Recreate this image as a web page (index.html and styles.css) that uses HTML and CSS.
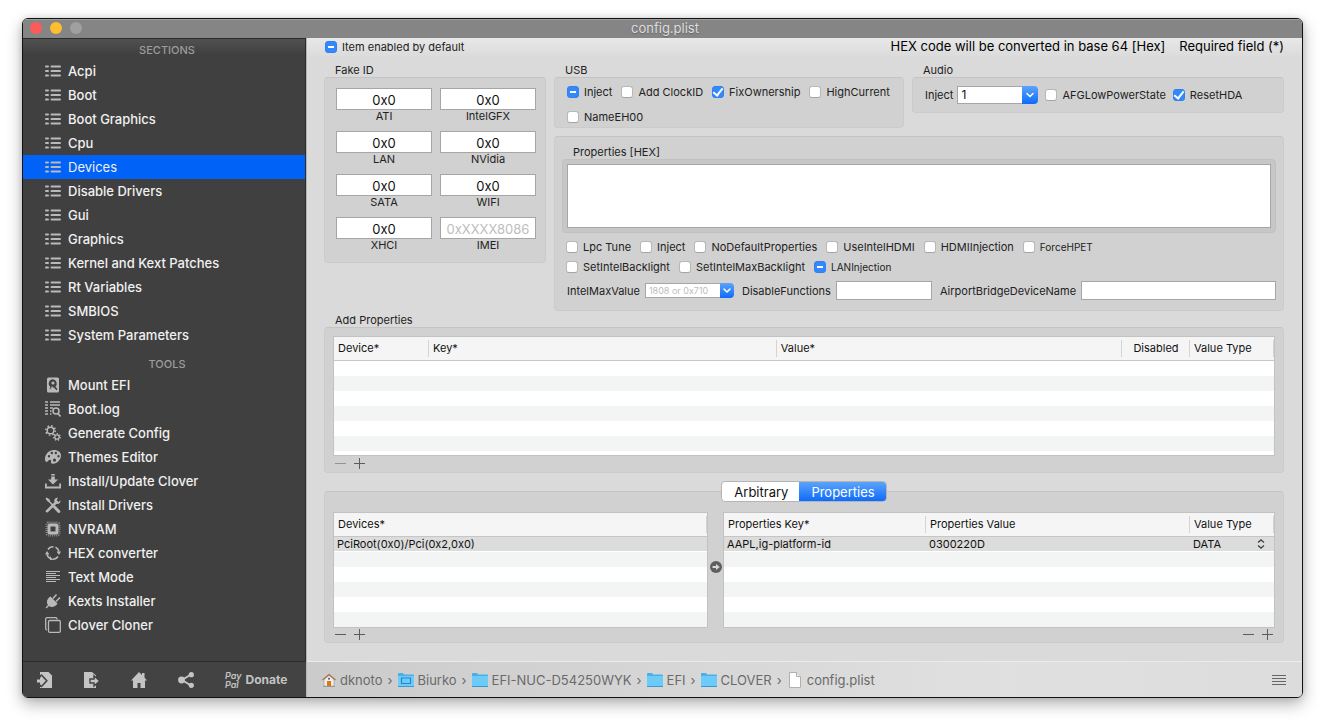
FILE: index.html
```html
<!DOCTYPE html>
<html lang="en">
<head>
    <meta charset="UTF-8">
    <meta name="viewport" content="width=device-width, initial-scale=1.0">
    <title>config.plist</title>
    <link rel="stylesheet" href="styles.css">
</head>
<body>

    <!-- Icons -->
    <svg class="sprite" aria-hidden="true">
        <symbol id="i-list" viewBox="0 0 16 16">
            <path d="M1 3.5h2M6.5 3.5h8.500M1 8h2M6.500 8h8.500M1 12.500h2M6.500 12.500h8.500" fill="none" stroke="currentColor" stroke-width="2" stroke-linecap="round"/>
        </symbol>
        <symbol id="i-disk" viewBox="0 0 16 16">
            <path fill="currentColor" fill-rule="evenodd" d="M3.500 0.500h9a1.500 1.500 0 0 1 1.500 1.500v12a1.500 1.500 0 0 1-1.500 1.500h-9A1.500 1.500 0 0 1 2 14V2A1.500 1.500 0 0 1 3.500.500zM8 2.200a4.300 4.300 0 0 0-2.600 7.700L4.500 12l1.500.5 1.500-2.100a4.300 4.300 0 0 0 1.400 0l2.600 2.800 1-1-2.100-2.600A4.300 4.300 0 0 0 8 2.200z"/>
            <circle cx="8" cy="6" r="1.600" fill="currentColor"/>
            <path d="M7.500 9.500l-2 3" stroke="currentColor" stroke-width="1.200"/>
        </symbol>
        <symbol id="i-log" viewBox="0 0 16 16">
            <path d="M0 1h3M0 4h3M0 7h3M0 10h3M0 13h3M5 1h10M5 4h10M5 7h3M5 10h1.500M5 13h1.500" stroke="currentColor" stroke-width="1.600"/>
            <circle cx="11" cy="10" r="3" fill="none" stroke="currentColor" stroke-width="1.500"/>
            <path d="M13 12.500l2.500 3" stroke="currentColor" stroke-width="1.600"/>
        </symbol>
        <symbol id="i-gears" viewBox="0 0 16 16">
            <g fill="none" stroke="currentColor">
                <circle cx="5.500" cy="5.500" r="3.300" stroke-width="1.400"/>
                <circle cx="5.500" cy="5.500" r="4.700" stroke-width="1.600" stroke-dasharray="1.600 2.090"/>
                <circle cx="12" cy="12" r="2.200" stroke-width="1.300"/>
                <circle cx="12" cy="12" r="3.300" stroke-width="1.300" stroke-dasharray="1.300 1.660"/>
            </g>
        </symbol>
        <symbol id="i-palette" viewBox="0 0 16 16">
            <path fill="currentColor" fill-rule="evenodd" d="M9 1c4 0 7 2.200 7 5.600 0 3.900-3.600 8.200-8 8.200-1.600 0-2.400-.9-2-2 .4-1.200.1-2-1-2-1.400 0-2 2.200-3.400 2.200C.500 13 0 11.400 0 9.800 0 5 4.200 1 9 1zM4 6a1.200 1.200 0 1 0 0 2.400A1.200 1.200 0 0 0 4 6zm2.800-3.200a1.200 1.200 0 1 0 0 2.400 1.200 1.200 0 0 0 0-2.400zm4 0a1.200 1.200 0 1 0 0 2.400 1.200 1.200 0 0 0 0-2.400zm2.700 3.200a1.200 1.200 0 1 0 0 2.400 1.200 1.200 0 0 0 0-2.400zM9.500 9.500a1.600 1.600 0 1 0 0 3.200 1.600 1.600 0 0 0 0-3.200z"/>
        </symbol>
        <symbol id="i-install" viewBox="0 0 16 16">
            <path fill="currentColor" d="M6.200 1h3.600v1.400H6.200zM6.200 3.400h3.600v3.200H13L8 11.400 3 6.600h3.200zM0 10.500h1.800v3h12.400v-3H16V15.500H0z"/>
        </symbol>
        <symbol id="i-tools" viewBox="0 0 16 16">
            <path d="M1.500 2l4 3.800 3 3.400" stroke="currentColor" stroke-width="1.500" fill="none"/>
            <path d="M9.500 10l4.300 4.500" stroke="currentColor" stroke-width="3" stroke-linecap="round"/>
            <path d="M2 14.200L11.500 5" stroke="currentColor" stroke-width="2.600" stroke-linecap="round"/>
            <path d="M15.500 3.500l-2.200 1.400-1.700-1.600L13 .700c-2.500-.3-4.300 1.500-3.700 3.900l2.400 2.300c2.500.2 4.200-1.300 3.800-3.400zM.500 1.500L1.700.500l3.200 2.300-.2 1.900-1.700.1z" fill="currentColor"/>
        </symbol>
        <symbol id="i-chip" viewBox="0 0 16 16">
            <rect x="1.500" y="1.500" width="13" height="13" rx="2" fill="none" stroke="currentColor" stroke-width="2" stroke-dasharray="1 1" opacity=".6"/>
            <rect x="4" y="4" width="8" height="8" rx="1" fill="none" stroke="currentColor" stroke-width="3"/>
        </symbol>
        <symbol id="i-convert" viewBox="0 0 16 16">
            <path d="M2 9.500A6.200 6.200 0 0 0 5 13.500M7.500 14.200A6.200 6.200 0 0 0 13 11.500M14 6.500A6.200 6.200 0 0 0 10.500 2.300M8.500 1.800A6.200 6.200 0 0 0 3 4.500" fill="none" stroke="currentColor" stroke-width="1.600"/>
            <path d="M0 9.500l2-3.500 2.500 3.500zM11.500 6.500H16L14 10zM5 11v4h3z" fill="currentColor"/>
        </symbol>
        <symbol id="i-text" viewBox="0 0 16 16">
            <path d="M1 2.500h14M1 4.500h10M1 6.500h14M1 8.500h10M1 10.500h14M1 12.500h10" stroke="currentColor" stroke-width="1"/>
        </symbol>
        <symbol id="i-plug" viewBox="0 0 16 16">
            <path d="M5.500 3.500l7 7c-2 3.500-6 4.500-8.500 2.500l-2.500 2.500-1-1L3 12c-2-2.500-1-6.500 2.500-8.500z" fill="currentColor"/>
            <path d="M8 5.500L11.500 1.500M11 8.500L15 4.500" stroke="currentColor" stroke-width="1.500"/>
        </symbol>
        <symbol id="i-clone" viewBox="0 0 16 16">
            <path d="M12 2.500V1.800A1.200 1.200 0 0 0 10.800.700H2A1.300 1.300 0 0 0 .700 2v9.500A1.300 1.300 0 0 0 2 12.800" fill="none" stroke="currentColor" stroke-width="1.300"/>
            <rect x="3.500" y="3.500" width="11.800" height="11.800" rx="1.300" fill="none" stroke="currentColor" stroke-width="1.300"/>
        </symbol>
        <symbol id="i-import" viewBox="0 0 16 16">
            <path d="M3 0h8.500L15 3.500V16H3z" fill="currentColor"/>
            <path d="M4 2.500L9.800 8.800 4 15" fill="none" stroke="#434343" stroke-width="1.600"/>
            <path d="M3 3h1v12H3z" fill="#434343"/>
            <path d="M0 7.500h3V5l4.500 4L3 13v-2.500H0z" fill="currentColor"/>
        </symbol>
        <symbol id="i-export" viewBox="0 0 16 16">
            <path d="M0 0h8l4 3.500V16H0z" fill="currentColor"/>
            <path d="M6 7h4V3.800L15.800 9 10 14v-3H6z" fill="currentColor" stroke="#434343" stroke-width="1.400"/>
        </symbol>
        <symbol id="i-home" viewBox="0 0 16 16">
            <path d="M8 0l3 3V1h2.500v4.500L16 8.500h-2V16H9.500v-5h-3v5H2V8.500H0z" fill="currentColor"/>
        </symbol>
        <symbol id="i-share" viewBox="0 0 16 16">
            <path d="M13 2.500L4 8l9 5.500" fill="none" stroke="currentColor" stroke-width="2"/>
            <circle cx="3.500" cy="8" r="3.400" fill="currentColor"/>
            <circle cx="13.300" cy="2.700" r="2.600" fill="currentColor"/>
            <circle cx="13.300" cy="13.300" r="2.600" fill="currentColor"/>
        </symbol>
        <symbol id="i-minus" viewBox="0 0 11 11">
            <path d="M0 5.500h11" stroke="currentColor"/>
        </symbol>
        <symbol id="i-plus" viewBox="0 0 11 11">
            <path d="M0 5.500h11M5.500 0v11" stroke="currentColor"/>
        </symbol>
        <symbol id="i-down" viewBox="0 0 10 10">
            <path d="M2 3.500L5 6.500 8 3.500" fill="none" stroke="#fff" stroke-width="1.500" stroke-linecap="round" stroke-linejoin="round"/>
        </symbol>
        <symbol id="i-updown" viewBox="0 0 8 10">
            <path d="M1 3.500L4 .900l3 2.600M1 6.500l3 2.600 3-2.600" fill="none" stroke="#444" stroke-width="1.300"/>
        </symbol>
        <symbol id="i-arrow" viewBox="0 0 12 12">
            <circle cx="6" cy="6" r="6" fill="#5f5f5f"/>
            <path d="M2.500 5h3.500V3L9.800 6 6 9V7H2.500z" fill="#d8d8d8"/>
        </symbol>
        <symbol id="i-house" viewBox="0 0 14 14">
            <path d="M2 6.500L7 2.500l5 4V13H2z" fill="#eee" stroke="#999" stroke-width=".6"/>
            <path d="M.500 7L7 1.500 13.500 7" fill="none" stroke="#a9744c" stroke-width="1.300"/>
            <circle cx="7" cy="5.800" r="1" fill="#555"/>
            <path d="M5 8h4v5H5z" fill="#d9790f"/>
            <path d="M1 13.500h12" stroke="#999"/>
        </symbol>
        <symbol id="i-folder" viewBox="0 0 16 14">
            <path d="M0 1a1 1 0 0 1 1-1h4l1 1.500h9a1 1 0 0 1 1 1V13.500H0z" fill="#49b0e6"/>
            <path d="M0 3h16v10H0z" fill="#6dcbfa"/>
            <path d="M0 13.500h16" stroke="#3b98d0"/>
        </symbol>
        <symbol id="i-desktop" viewBox="0 0 16 14">
            <path d="M0 1a1 1 0 0 1 1-1h4l1 1.500h9a1 1 0 0 1 1 1V13.500H0z" fill="#49b0e6"/>
            <path d="M0 3h16v10H0z" fill="#6dcbfa"/>
            <path d="M3.500 5h9v5.500h-9z" fill="#6dcbfa" stroke="#2489c9" stroke-width="1.200"/>
            <path d="M0 13.500h16" stroke="#3b98d0"/>
        </symbol>
        <symbol id="i-file" viewBox="0 0 12 16">
            <path d="M.500.500h7l4 4v11H.500z" fill="#fff" stroke="#b0b0b0"/>
            <path d="M7.500.500v4h4" fill="#eee" stroke="#b0b0b0"/>
        </symbol>
        <symbol id="i-menu" viewBox="0 0 14 10">
            <path d="M0 .500h14M0 3.500h14M0 6.500h14M0 9.500h14" stroke="#666"/>
        </symbol>
    </svg>

    <div class="window">
        <header class="titlebar">
            <div class="lights">
                <button class="light red" aria-label="Close"></button>
                <button class="light yellow" aria-label="Minimize"></button>
                <button class="light off" aria-label="Zoom" disabled></button>
            </div>
            <h1>config.plist</h1>
        </header>

        <div class="body">
            <!-- Sidebar -->
            <aside class="sidebar">
                <nav class="menu">
                    <h2>SECTIONS</h2>
                    <a href="#"><svg><use href="#i-list"/></svg>Acpi</a>
                    <a href="#"><svg><use href="#i-list"/></svg>Boot</a>
                    <a href="#"><svg><use href="#i-list"/></svg>Boot Graphics</a>
                    <a href="#"><svg><use href="#i-list"/></svg>Cpu</a>
                    <a href="#" class="active"><svg><use href="#i-list"/></svg>Devices</a>
                    <a href="#"><svg><use href="#i-list"/></svg>Disable Drivers</a>
                    <a href="#"><svg><use href="#i-list"/></svg>Gui</a>
                    <a href="#"><svg><use href="#i-list"/></svg>Graphics</a>
                    <a href="#"><svg><use href="#i-list"/></svg>Kernel and Kext Patches</a>
                    <a href="#"><svg><use href="#i-list"/></svg>Rt Variables</a>
                    <a href="#"><svg><use href="#i-list"/></svg>SMBIOS</a>
                    <a href="#"><svg><use href="#i-list"/></svg>System Parameters</a>
                    <h2 class="tools-title">TOOLS</h2>
                    <a href="#"><svg><use href="#i-disk"/></svg>Mount EFI</a>
                    <a href="#"><svg><use href="#i-log"/></svg>Boot.log</a>
                    <a href="#"><svg><use href="#i-gears"/></svg>Generate Config</a>
                    <a href="#"><svg><use href="#i-palette"/></svg>Themes Editor</a>
                    <a href="#"><svg><use href="#i-install"/></svg>Install/Update Clover</a>
                    <a href="#"><svg><use href="#i-tools"/></svg>Install Drivers</a>
                    <a href="#"><svg><use href="#i-chip"/></svg>NVRAM</a>
                    <a href="#"><svg><use href="#i-convert"/></svg>HEX converter</a>
                    <a href="#"><svg><use href="#i-text"/></svg>Text Mode</a>
                    <a href="#"><svg><use href="#i-plug"/></svg>Kexts Installer</a>
                    <a href="#"><svg><use href="#i-clone"/></svg>Clover Cloner</a>
                </nav>
                <div class="actions">
                    <button aria-label="Import"><svg><use href="#i-import"/></svg></button>
                    <button aria-label="Export"><svg><use href="#i-export"/></svg></button>
                    <button aria-label="Home"><svg><use href="#i-home"/></svg></button>
                    <button aria-label="Share"><svg><use href="#i-share"/></svg></button>
                    <button class="donate"><span class="paypal">Pay<br>Pal</span>Donate</button>
                </div>
            </aside>

            <!-- Devices page -->
            <main class="main">
                <div class="page">
                    <div class="top">
                        <label class="check"><input type="checkbox" class="mixed">Item enabled by default</label>
                        <p class="notes"><span>HEX code will be converted in base 64 [Hex]</span><span>Required field (*)</span></p>
                    </div>

                    <div class="groups">
                        <section>
                            <h3>Fake ID</h3>
                            <div class="box fake">
                                <label><input type="text" value="0x0">ATI</label>
                                <label><input type="text" value="0x0">IntelGFX</label>
                                <label><input type="text" value="0x0">LAN</label>
                                <label><input type="text" value="0x0">NVidia</label>
                                <label><input type="text" value="0x0">SATA</label>
                                <label><input type="text" value="0x0">WIFI</label>
                                <label><input type="text" value="0x0">XHCI</label>
                                <label><input type="text" placeholder="0xXXXX8086">IMEI</label>
                            </div>
                        </section>

                        <div class="right">
                            <div class="row">
                                <section class="usb">
                                    <h3>USB</h3>
                                    <div class="box checks">
                                        <label class="check"><input type="checkbox" class="mixed">Inject</label>
                                        <label class="check"><input type="checkbox">Add ClockID</label>
                                        <label class="check"><input type="checkbox" checked>FixOwnership</label>
                                        <label class="check"><input type="checkbox">HighCurrent</label>
                                        <label class="check"><input type="checkbox">NameEH00</label>
                                    </div>
                                </section>
                                <section class="audio">
                                    <h3>Audio</h3>
                                    <div class="box checks">
                                        <label for="audioInject">Inject</label>
                                        <span class="combo">
                                            <select id="audioInject"><option>1</option></select>
                                            <svg><use href="#i-down"/></svg>
                                        </span>
                                        <label class="check"><input type="checkbox">AFGLowPowerState</label>
                                        <label class="check"><input type="checkbox" checked>ResetHDA</label>
                                    </div>
                                </section>
                            </div>

                            <section class="box props">
                                <h3><label for="hex">Properties [HEX]</label></h3>
                                <div class="inner"><textarea id="hex"></textarea></div>
                                <div class="options">
                                    <label class="check"><input type="checkbox">Lpc Tune</label>
                                    <label class="check"><input type="checkbox">Inject</label>
                                    <label class="check"><input type="checkbox">NoDefaultProperties</label>
                                    <label class="check"><input type="checkbox">UseIntelHDMI</label>
                                    <label class="check"><input type="checkbox">HDMIInjection</label>
                                    <label class="check small"><input type="checkbox">ForceHPET</label>
                                </div>
                                <div class="options">
                                    <label class="check"><input type="checkbox">SetIntelBacklight</label>
                                    <label class="check"><input type="checkbox">SetIntelMaxBacklight</label>
                                    <label class="check small"><input type="checkbox" class="mixed">LANInjection</label>
                                </div>
                                <div class="fields">
                                    <label for="maxValue">IntelMaxValue</label>
                                    <span class="combo mini">
                                        <select id="maxValue"><option>1808 or 0x710</option></select>
                                        <svg><use href="#i-down"/></svg>
                                    </span>
                                    <label for="disableFn">DisableFunctions</label>
                                    <input type="text" id="disableFn" class="fn">
                                    <label for="airport">AirportBridgeDeviceName</label>
                                    <input type="text" id="airport" class="airport">
                                </div>
                            </section>
                        </div>
                    </div>

                    <section class="add">
                        <h3>Add Properties</h3>
                        <div class="box">
                            <div class="grid tall">
                                <table>
                                    <thead>
                                        <tr>
                                            <th class="w-device">Device*</th>
                                            <th class="w-name">Key*</th>
                                            <th>Value*</th>
                                            <th class="w-disabled">Disabled</th>
                                            <th class="w-type">Value Type</th>
                                        </tr>
                                    </thead>
                                </table>
                            </div>
                            <div class="edit">
                                <button aria-label="Remove" disabled><svg><use href="#i-minus"/></svg></button>
                                <button aria-label="Add"><svg><use href="#i-plus"/></svg></button>
                            </div>
                        </div>
                    </section>

                    <section class="box lists">
                        <div class="tabs">
                            <button>Arbitrary</button>
                            <button class="on">Properties</button>
                        </div>
                        <div class="split">
                            <div class="devices">
                                <div class="grid">
                                    <table>
                                        <thead><tr><th>Devices*</th></tr></thead>
                                        <tbody><tr><td>PciRoot(0x0)/Pci(0x2,0x0)</td></tr></tbody>
                                    </table>
                                </div>
                                <div class="edit">
                                    <button aria-label="Remove"><svg><use href="#i-minus"/></svg></button>
                                    <button aria-label="Add"><svg><use href="#i-plus"/></svg></button>
                                </div>
                            </div>
                            <button class="go" aria-label="Show properties"><svg><use href="#i-arrow"/></svg></button>
                            <div class="values">
                                <div class="grid">
                                    <table>
                                        <thead>
                                            <tr>
                                                <th class="w-key">Properties Key*</th>
                                                <th>Properties Value</th>
                                                <th class="w-type">Value Type</th>
                                            </tr>
                                        </thead>
                                        <tbody>
                                            <tr>
                                                <td>AAPL,ig-platform-id</td>
                                                <td>0300220D</td>
                                                <td><span class="type"><select aria-label="Value Type"><option>DATA</option></select><svg><use href="#i-updown"/></svg></span></td>
                                            </tr>
                                        </tbody>
                                    </table>
                                </div>
                                <div class="edit end">
                                    <button aria-label="Remove"><svg><use href="#i-minus"/></svg></button>
                                    <button aria-label="Add"><svg><use href="#i-plus"/></svg></button>
                                </div>
                            </div>
                        </div>
                    </section>
                </div>

                <footer class="pathbar">
                    <nav class="path">
                        <a href="#"><svg class="house"><use href="#i-house"/></svg>dknoto</a><i>›</i>
                        <a href="#"><svg><use href="#i-desktop"/></svg>Biurko</a><i>›</i>
                        <a href="#"><svg><use href="#i-folder"/></svg>EFI-NUC-D54250WYK</a><i>›</i>
                        <a href="#"><svg><use href="#i-folder"/></svg>EFI</a><i>›</i>
                        <a href="#"><svg><use href="#i-folder"/></svg>CLOVER</a><i>›</i>
                        <a href="#"><svg class="file"><use href="#i-file"/></svg>config.plist</a>
                    </nav>
                    <button class="burger" aria-label="Menu"><svg><use href="#i-menu"/></svg></button>
                </footer>
            </main>
        </div>
    </div>

    <script>
        document.querySelectorAll('.mixed').forEach(box => box.indeterminate = true);
    </script>
</body>
</html>
```

FILE: styles.css
```css
* {
    margin: 0;
    padding: 0;
    box-sizing: border-box;
}
body {
    background: #fff;
    min-height: 100vh;
    padding: 18px 22px 26px;
    display: flex;
    font-family: Inter, "Liberation Sans", sans-serif;
    font-size: 11px;
    line-height: 14px;
    color: #222;
}
button, input, select, textarea {
    font: inherit;
    color: inherit;
    background: none;
    border: 0;
    border-radius: 0;
    outline: 0;
    appearance: none;
}
a {
    color: inherit;
    text-decoration: none;
}
svg {
    display: block;
    flex: none;
}
.sprite {
    display: none;
}

/* Window */
.window {
    flex: 1;
    display: flex;
    flex-direction: column;
    border: 1px solid #111;
    border-radius: 6px;
    overflow: hidden;
    box-shadow: 0 6px 16px rgba(0, 0, 0, 0.3), 0 0 6px rgba(0, 0, 0, 0.12);
}
.titlebar {
    display: grid;
    grid-template-columns: 1fr auto 1fr;
    align-items: center;
    height: 19px;
    padding: 0 2px 1px 7px;
    background: #858585;
    box-shadow: inset 0 1px #a0a0a0;
}
.titlebar h1 {
    font-size: 13px;
    font-weight: 400;
    color: #dedede;
    text-shadow: 0 1px 1px #666;
}
.lights {
    display: flex;
    gap: 8px;
}
.light {
    width: 12px;
    height: 12px;
    border-radius: 50%;
}
.red { background: #fc5b57; }
.yellow { background: #fdbe2f; }
.off { background: #a0a0a0; }

.body {
    flex: 1;
    display: flex;
}

/* Sidebar */
.sidebar {
    width: 283px;
    flex: none;
    display: flex;
    flex-direction: column;
    background: #404040;
    color: #f0f0f0;
}
.menu {
    flex: 1;
    padding-bottom: 24px;
    background: linear-gradient(#525252, #404040 16px);
    border-right: 1px solid #2c2c2c;
    box-shadow: inset 0 1px #2c2c2c;
}
.menu h2 {
    height: 21px;
    padding: 5px 0 0 6px;
    font-size: 11px;
    font-weight: 500;
    text-align: center;
    color: #9c9c9c;
}
.menu .tools-title {
    height: 26px;
    padding-top: 10px;
}
.menu a {
    display: flex;
    align-items: center;
    gap: 7px;
    height: 24px;
    padding-left: 22px;
    font-size: 13px;
    font-weight: 500;
}
.menu svg {
    width: 16px;
    height: 16px;
    color: #b9b9b9;
}
.menu .active {
    background: #0062f6;
    font-weight: 400;
}
.actions {
    display: flex;
    align-items: center;
    gap: 31px;
    height: 36px;
    padding-left: 14px;
    background: #434343;
    border-top: 1px solid #2c2c2c;
    color: #c4c4c4;
}
.actions svg {
    width: 16px;
    height: 16px;
}
.donate {
    display: flex;
    align-items: center;
    gap: 4px;
    font-size: 12px;
    font-weight: 700;
}
.paypal {
    font-size: 9px;
    line-height: 9px;
    font-weight: 600;
    font-style: italic;
    text-align: left;
}

/* Main */
.main {
    flex: 1;
    min-width: 0;
    display: flex;
    flex-direction: column;
    background: linear-gradient(#e8e8e8, #dadada 20px);
    border-left: 1px solid #b4b4b4;
}
.page {
    flex: 1;
    padding: 0 18px 18px 17px;
}
.top {
    display: flex;
    justify-content: space-between;
    height: 25px;
}
.top .check {
    height: 18px;
    padding-left: 1px;
}
.notes {
    display: flex;
    gap: 14px;
    font-size: 13px;
    line-height: 17px;
    color: #000;
}
h3 {
    padding-left: 11px;
    font-size: 11px;
    font-weight: 400;
}
.box {
    background: #d1d1d1;
    border: 1px solid #cbcbcb;
    border-top-color: #c4c4c4;
    border-radius: 4px;
}
.groups {
    display: grid;
    grid-template-columns: 222px 1fr;
    gap: 8px;
}
.right {
    display: flex;
    flex-direction: column;
    gap: 8px;
    min-width: 0;
}
.row {
    display: flex;
    gap: 8px;
}
.usb {
    flex: 350;
}
.audio {
    flex: 372;
}

/* Form controls */
.check {
    display: flex;
    align-items: center;
    gap: 5px;
    white-space: nowrap;
}
.check input {
    display: flex;
    justify-content: center;
    align-items: center;
    width: 12px;
    height: 12px;
    background: #fff;
    border: 1px solid #b8b8b8;
    border-bottom-color: #a4a4a4;
    border-radius: 3px;
}
.check input:checked, .check input:indeterminate {
    background: #3388fd;
    border-color: #2f80f0;
}
.check input:indeterminate::after {
    content: "";
    width: 6px;
    height: 2px;
    background: #fff;
}
.check input:checked::after {
    content: "";
    width: 4px;
    height: 8px;
    margin-bottom: 2px;
    border: solid #fff;
    border-width: 0 2px 2px 0;
    transform: rotate(38deg);
}
.small {
    font-size: 10px;
}
input[type=text], textarea {
    background: #fff;
    border: 1px solid #a6a6a6;
}
.fake {
    display: grid;
    grid-template-columns: 1fr 1fr;
    gap: 8px;
    padding: 10px 9px 10px 11px;
}
.fake label {
    text-align: center;
    line-height: 13px;
}
.fake input {
    display: block;
    width: 100%;
    height: 22px;
    padding-top: 2px;
    font-size: 13px;
    text-align: center;
    color: #111;
}
::placeholder {
    color: #bdbdbd;
}
.checks {
    display: flex;
    flex-wrap: wrap;
    align-items: center;
    column-gap: 9px;
    padding: 5px 12px 0;
}
.usb .checks {
    height: 51px;
    row-gap: 5px;
    padding-top: 4px;
}
.usb .check {
    height: 20px;
}
.audio .checks {
    height: 36px;
    column-gap: 7px;
    padding: 0 12px;
}
.combo {
    display: flex;
    width: 81px;
    height: 18px;
    margin-left: -3px;
}
.combo select {
    flex: 1;
    min-width: 0;
    padding-left: 3px;
    background: #fff;
    border: 1px solid #a6a6a6;
    border-right: 0;
    font-size: 12px;
    color: #111;
}
.combo svg {
    width: 16px;
    height: 18px;
    padding: 3px;
    background: linear-gradient(#5ba4fb, #0f6bfb);
    border-radius: 0 4px 4px 0;
    pointer-events: none;
}
.mini {
    width: 89px;
    height: 15px;
}
.mini select {
    font-size: 9px;
    color: #bdbdbd;
}
.mini svg {
    width: 14px;
    height: 15px;
    padding: 2px;
}
.props {
    padding: 8px 7px 10px;
}
.inner {
    padding: 4px;
    margin-bottom: 4px;
    background: #c7c7c7;
    border: 1px solid #c0c0c0;
    border-radius: 4px;
}
.inner textarea {
    display: block;
    width: 100%;
    height: 64px;
    resize: none;
}
.options {
    display: flex;
    gap: 9px;
    height: 20px;
    padding-left: 4px;
}
.fields {
    display: flex;
    align-items: center;
    gap: 8px;
    margin-top: 4px;
    padding-left: 5px;
}
.fields input {
    width: 96px;
    height: 19px;
    margin-left: -3px;
}
.fields .airport {
    flex: 1;
    min-width: 0;
}

/* Tables */
.add {
    margin: 2px 0 18px;
}
.add .box {
    padding: 8px 8px 0;
}
.grid {
    height: 116px;
    border: 1px solid #c2c2c2;
    background: repeating-linear-gradient(#fff 0 15px, #f3f5f5 15px 30px) 0 24px;
}
.tall {
    height: 120px;
}
table {
    width: 100%;
    table-layout: fixed;
    border-collapse: separate;
    border-spacing: 0;
}
th {
    height: 24px;
    padding: 0 0 2px 4px;
    font-weight: 400;
    text-align: left;
    color: #111;
    background: linear-gradient(#d4d4d4, #d4d4d4) right 3px / 1px 17px no-repeat #f5f5f5;
    border-bottom: 1px solid #c6c6c6;
}
td {
    height: 15px;
    padding-left: 3px;
    background: #dcdcdc;
    border-bottom: 1px solid #fff;
    color: #111;
}
.w-device { width: 95px; }
.w-name { width: 37%; }
.w-key { width: 202px; }
.w-disabled {
    width: 68px;
    padding-left: 0;
    text-align: center;
}
.w-type { width: 84px; }
.type {
    display: flex;
    align-items: center;
    height: 14px;
    padding-right: 9px;
}
.type select {
    flex: 1;
}
.type svg {
    width: 8px;
    height: 10px;
}
.edit {
    display: flex;
    gap: 8px;
    height: 14px;
    padding: 0 2px;
}
.edit button {
    height: 12px;
    color: #5c5c5c;
}
.edit button:disabled {
    color: #939393;
}
.edit svg {
    width: 11px;
    height: 11px;
    margin-top: 1px;
}
.add .edit {
    height: 16px;
    padding-top: 1px;
}
.end {
    justify-content: flex-end;
}
.lists {
    display: flex;
    flex-direction: column;
    padding: 0 8px;
}
.tabs {
    display: flex;
    align-self: center;
    height: 21px;
    margin: -11px 0 10px;
    background: #fff;
    border: 1px solid #b5b5b5;
    border-radius: 4px;
    overflow: hidden;
    font-size: 13px;
}
.tabs button {
    padding: 0 11px 0 12px;
    color: #111;
}
.tabs .on {
    color: #fff;
    background: linear-gradient(#5ba4fb, #0f6bfb);
}
.split {
    display: grid;
    grid-template-columns: 375fr 15px 552fr;
}
.go {
    align-self: center;
    justify-self: center;
    margin-bottom: 20px;
}
.go svg {
    width: 12px;
    height: 12px;
}

/* Path bar */
.pathbar {
    display: flex;
    align-items: center;
    justify-content: space-between;
    height: 36px;
    padding: 0 16px 0 15px;
    background: linear-gradient(90deg, #cbcbcb, #e0e0e0 70%, #dcdcdc);
    border-top: 1px solid #ebebeb;
    font-size: 13px;
    color: #6a6a6a;
}
.path {
    display: flex;
    align-items: center;
    gap: 5px;
}
.path a {
    display: flex;
    align-items: center;
    gap: 4px;
}
.path i {
    font-style: normal;
}
.path svg {
    width: 16px;
    height: 14px;
}
.path .house {
    width: 14px;
    height: 14px;
}
.path .file {
    width: 12px;
    height: 16px;
    margin: 0 2px;
}
.burger svg {
    width: 14px;
    height: 10px;
}
```
